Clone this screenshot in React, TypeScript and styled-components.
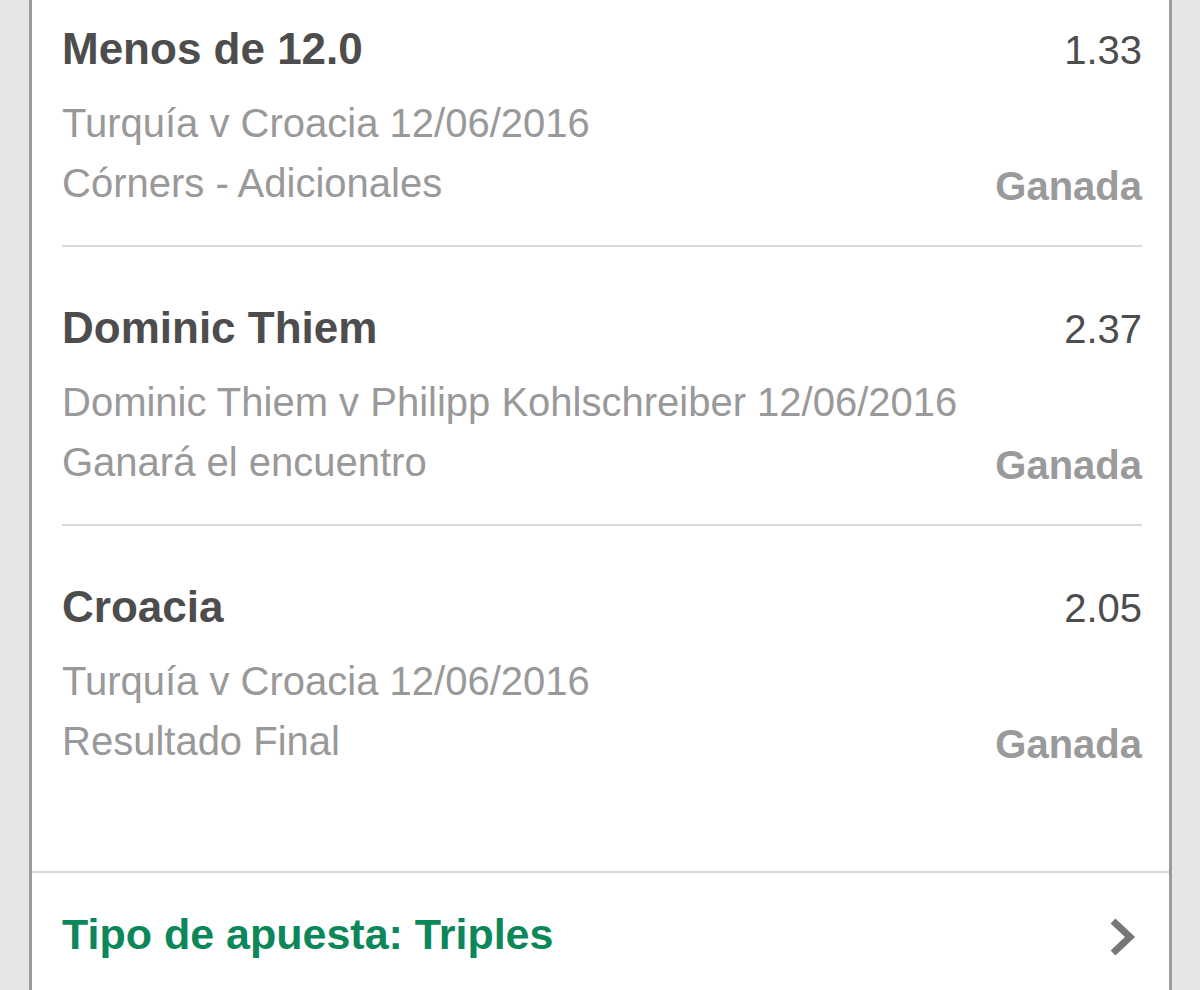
import React from "react";
import styled, { createGlobalStyle } from "styled-components";

const GlobalStyle = createGlobalStyle`
  html, body {
    margin: 0;
    padding: 0;
    background: #e6e6e6;
    font-family: "Liberation Sans", Arial, Helvetica, sans-serif;
  }
  body { overflow: hidden; }
`;

const Page = styled.div`
  padding: 0 28px 0 29px;
  min-height: 990px;
`;

const Card = styled.section`
  margin-top: -32px;
  background: #ffffff;
  border-left: 3px solid #9c9c9c;
  border-right: 3px solid #9c9c9c;
  min-height: 1100px;
`;

const List = styled.div`
  padding: 0 27px 0 30px;
`;

const Item = styled.article<{ $last?: boolean }>`
  padding: 51px 0 ${(p) => (p.$last ? "100px" : "32px")};
  border-bottom: ${(p) => (p.$last ? "none" : "2px solid #d9d9d9")};
`;

const Head = styled.div`
  display: flex;
  justify-content: space-between;
  align-items: baseline;
  margin-bottom: 13px;
`;

const Title = styled.h3`
  margin: 0;
  font-size: 44px;
  line-height: 60px;
  font-weight: 700;
  color: #4d4d4d;
`;

const Odds = styled.span`
  font-size: 40px;
  line-height: 60px;
  color: #4d4d4d;
`;

const MetaRow = styled.div`
  display: flex;
  justify-content: space-between;
  align-items: flex-end;
`;

const Meta = styled.div`
  font-size: 40px;
  line-height: 60px;
  color: #999999;
  white-space: nowrap;
`;

const Status = styled.span`
  font-size: 40px;
  line-height: 54px;
  font-weight: 700;
  color: #9a9a9a;
`;

const Footer = styled.div`
  border-top: 2px solid #d7d7d7;
  display: flex;
  align-items: center;
  justify-content: space-between;
  padding: 31px 31px 0 30px;
`;

const FooterLabel = styled.span`
  font-size: 43px;
  line-height: 60px;
  font-weight: 700;
  color: #0b875a;
`;

const ChevronBox = styled.span`
  display: flex;
  margin-top: 6px;
`;

const Chevron = () => (
  <ChevronBox>
    <svg width="30" height="44" viewBox="0 0 30 44" aria-hidden="true">
      <polyline
        points="5,6 22,22 5,38"
        fill="none"
        stroke="#777777"
        strokeWidth="7"
        strokeLinejoin="miter"
        strokeLinecap="butt"
      />
    </svg>
  </ChevronBox>
);

type Bet = {
  title: string;
  odds: string;
  event: string;
  market: string;
  status: string;
};

const bets: Bet[] = [
  {
    title: "Menos de 12.0",
    odds: "1.33",
    event: "Turquía v Croacia 12/06/2016",
    market: "Córners - Adicionales",
    status: "Ganada",
  },
  {
    title: "Dominic Thiem",
    odds: "2.37",
    event: "Dominic Thiem v Philipp Kohlschreiber 12/06/2016",
    market: "Ganará el encuentro",
    status: "Ganada",
  },
  {
    title: "Croacia",
    odds: "2.05",
    event: "Turquía v Croacia 12/06/2016",
    market: "Resultado Final",
    status: "Ganada",
  },
];

export default function App() {
  return (
    <>
      <GlobalStyle />
      <Page>
        <Card>
          <List>
            {bets.map((b, i) => (
              <Item key={i} $last={i === bets.length - 1}>
                <Head>
                  <Title>{b.title}</Title>
                  <Odds>{b.odds}</Odds>
                </Head>
                <Meta>{b.event}</Meta>
                <MetaRow>
                  <Meta>{b.market}</Meta>
                  <Status>{b.status}</Status>
                </MetaRow>
              </Item>
            ))}
          </List>
          <Footer>
            <FooterLabel>Tipo de apuesta: Triples</FooterLabel>
            <Chevron />
          </Footer>
        </Card>
      </Page>
    </>
  );
}
